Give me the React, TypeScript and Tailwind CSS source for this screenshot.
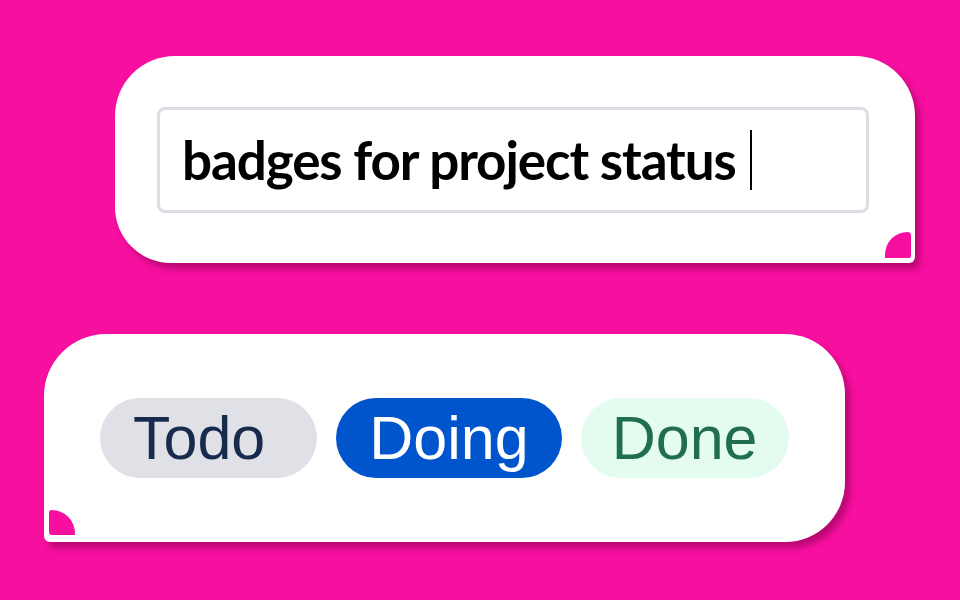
export default function App() {
  return (
    <div className="flex h-[600px] w-[960px] flex-col overflow-hidden bg-[#f70fa0]">
      {/* search bubble */}
      <div className="relative ml-[115px] mt-[56px] flex h-[207px] w-[800px] items-center rounded-tl-[60px] rounded-tr-[60px] rounded-bl-[56px] rounded-br-[6px] bg-white pl-[42px] shadow-[5px_6px_6px_rgba(110,0,60,0.45)]">
        <div className="flex h-[106px] w-[712px] items-center rounded-[8px] border-[3px] border-[#dcdde3] pl-[22px]">
          <span className="font-['Lato',sans-serif] text-[53px] font-bold tracking-[-1.1px] text-black">
            badges for project status
          </span>
          <span className="ml-[14px] h-[60px] w-[2px] bg-black" />
        </div>
        <div className="absolute bottom-[5px] right-[4px] h-[26px] w-[26px] rounded-tl-[26px] rounded-tr-[4px] rounded-br-[3px] bg-[#f70fa0]" />
      </div>

      {/* badges bubble */}
      <div className="relative ml-[44px] mt-[71px] flex h-[208px] w-[801px] items-center gap-[19px] rounded-tl-[62px] rounded-tr-[60px] rounded-br-[60px] rounded-bl-[6px] bg-white pl-[56px] shadow-[5px_6px_6px_rgba(110,0,60,0.45)]">
        <Badge label="Todo" className="bg-[#dfe1e6] pl-[33px] pr-[52px] text-[#172b4d]" />
        <Badge label="Doing" className="bg-[#0055cc] px-[33px] text-white" />
        <Badge label="Done" className="bg-[#e3fcef] px-[31px] text-[#216e4e]" />
        <div className="absolute bottom-[7px] left-[5px] h-[25px] w-[26px] rounded-tr-[26px] rounded-tl-[3px] rounded-bl-[3px] bg-[#f70fa0]" />
      </div>
    </div>
  );
}

function Badge({ label, className }: { label: string; className: string }) {
  return (
    <span
      className={`flex h-[80px] items-center rounded-full font-['Liberation_Sans',Arial,sans-serif] text-[61px] leading-none ${className}`}
    >
      {label}
    </span>
  );
}
